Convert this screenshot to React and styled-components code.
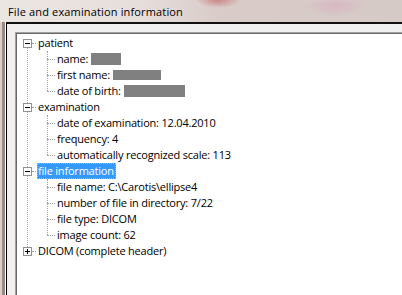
import React from 'react';
import styled, { createGlobalStyle, css } from 'styled-components';

const GlobalStyle = createGlobalStyle`
  html, body {
    margin: 0;
    padding: 0;
    background: #ffffff;
    overflow: hidden;
  }
  * {
    box-sizing: border-box;
  }
`;

const treeData = [
  {
    id: 'patient',
    label: 'patient',
    open: true,
    children: [
      { id: 'name', label: 'name:', redact: { w: 30, h: 12 } },
      { id: 'first', label: 'first name:', redact: { w: 48, h: 10 } },
      { id: 'dob', label: 'date of birth:', redact: { w: 61, h: 12 } },
    ],
  },
  {
    id: 'exam',
    label: 'examination',
    open: true,
    children: [
      { id: 'doe', label: 'date of examination: 12.04.2010' },
      { id: 'freq', label: 'frequency: 4' },
      { id: 'scale', label: 'automatically recognized scale: 113' },
    ],
  },
  {
    id: 'file',
    label: 'file information',
    open: true,
    selected: true,
    children: [
      { id: 'fname', label: 'file name: C:\\Carotis\\ellipse4' },
      { id: 'num', label: 'number of file in directory: 7/22' },
      { id: 'type', label: 'file type: DICOM' },
      { id: 'count', label: 'image count: 62' },
    ],
  },
  {
    id: 'dicom',
    label: 'DICOM (complete header)',
    open: false,
  },
];

class App extends React.Component {
  renderChildren(children) {
    return (
      <ChildList>
        {children.map((child) => (
          <li key={child.id}>
            <Row $child>
              <Dots $width={8} />
              <Label>
                {child.label}
                {child.redact && <Redacted $w={child.redact.w} $h={child.redact.h} />}
              </Label>
            </Row>
          </li>
        ))}
      </ChildList>
    );
  }

  render() {
    return (
      <Window>
        <GlobalStyle />
        <TitleBar>File and examination information</TitleBar>
        <Body>
          <Frame />
          <Client>
            <Panel>
              <TreeView>
                <RootList>
                  {treeData.map((node) => (
                    <li key={node.id}>
                      <Row>
                        <Expander $open={node.open} />
                        <Dots $width={4} />
                        <Label $selected={node.selected}>{node.label}</Label>
                      </Row>
                      {node.open && node.children && this.renderChildren(node.children)}
                    </li>
                  ))}
                </RootList>
              </TreeView>
            </Panel>
          </Client>
        </Body>
      </Window>
    );
  }
}

const Window = styled.div`
  width: 402px;
  height: 295px;
  display: flex;
  flex-direction: column;
  overflow: hidden;
  font-family: 'Open Sans', 'Noto Sans', sans-serif;
  font-size: 11px;
  letter-spacing: -0.2px;
  color: #000;
`;

const TitleBar = styled.div`
  height: 22px;
  flex: none;
  display: flex;
  align-items: center;
  padding-left: 8px;
  padding-top: 1px;
  font-size: 11px;
  letter-spacing: 0.15px;
  color: #000;
  background:
    radial-gradient(ellipse 22px 8px at 218px 0px, rgba(200, 110, 110, 0.75), rgba(200, 110, 110, 0) 100%),
    radial-gradient(ellipse 30px 10px at 335px 6px, rgba(215, 170, 190, 0.6), rgba(215, 170, 190, 0) 100%),
    linear-gradient(90deg, #ece6e3 0%, #e6dedb 35%, #d8cbc8 55%, #d6cac7 100%);
`;

const Body = styled.div`
  flex: 1;
  display: flex;
  min-height: 0;
`;

const Frame = styled.div`
  width: 5px;
  flex: none;
  border-left: 2px solid #d9cfcc;
  background: #9c8882;
`;

const Client = styled.div`
  flex: 1;
  display: flex;
  border-left: 1px solid #ffffff;
  min-width: 0;
`;

const Panel = styled.div`
  flex: 1;
  display: flex;
  background: #f0f0f0;
  border-top: 2px solid #111;
  border-left: 1px solid #000;
  padding: 8px 0 0 8px;
  min-width: 0;
`;

const TreeView = styled.div`
  flex: 1;
  background: #ffffff;
  border-top: 1px solid #a0a0a0;
  border-left: 1px solid #a0a0a0;
  box-shadow: inset 1px 1px 0 #696969;
  padding: 2px 0 0 1px;
`;

const RootList = styled.ul`
  position: relative;
  list-style: none;
  margin: 0;
  padding: 0;

  &::before {
    content: '';
    position: absolute;
    left: 10px;
    top: 13px;
    bottom: 12px;
    border-left: 1px dotted #a0a0a0;
  }
`;

const ChildList = styled.ul`
  position: relative;
  list-style: none;
  margin: 0;
  padding: 0;

  &::before {
    content: '';
    position: absolute;
    left: 30px;
    top: 0;
    bottom: 8px;
    border-left: 1px dotted #a0a0a0;
  }
`;

const Row = styled.div`
  height: 16px;
  display: flex;
  align-items: center;
  padding-left: ${({ $child }) => ($child ? '30px' : '6px')};
  white-space: nowrap;
`;

const Expander = styled.span`
  position: relative;
  z-index: 1;
  width: 9px;
  height: 9px;
  flex: none;
  border: 1px solid #919191;
  background: #ffffff;

  &::before {
    content: '';
    position: absolute;
    left: 1px;
    top: 3px;
    width: 5px;
    height: 1px;
    background: #000;
  }

  ${({ $open }) =>
    !$open &&
    css`
      &::after {
        content: '';
        position: absolute;
        left: 3px;
        top: 1px;
        width: 1px;
        height: 5px;
        background: #000;
      }
    `}
`;

const Dots = styled.span`
  width: ${({ $width }) => $width}px;
  flex: none;
  height: 0;
  border-top: 1px dotted #a0a0a0;
`;

const Label = styled.span`
  display: flex;
  align-items: center;
  height: 16px;
  margin-left: 1px;
  padding: 0 2px 0 1px;
  line-height: 16px;
  ${({ $selected }) =>
    $selected &&
    css`
      background: #3399ff;
      color: #ffffff;
      outline: 1px dotted #e8b46a;
      outline-offset: -1px;
    `}
`;

const Redacted = styled.span`
  display: inline-block;
  width: ${({ $w }) => $w}px;
  height: ${({ $h }) => $h}px;
  margin-left: 3px;
  background: #808080;
`;

export default App;
